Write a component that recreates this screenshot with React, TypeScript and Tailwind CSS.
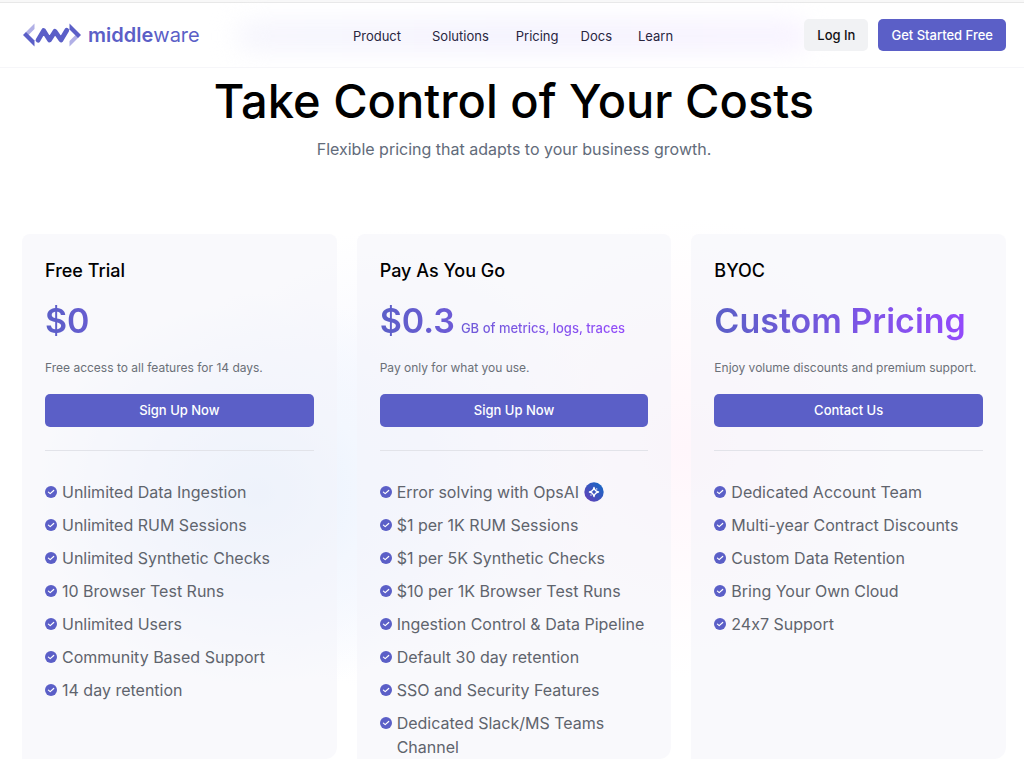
const navLinks = [
  { label: "Product", spacing: "mr-[31px]" },
  { label: "Solutions", spacing: "mr-[27px]" },
  { label: "Pricing", spacing: "mr-[22px]" },
  { label: "Docs", spacing: "mr-[26px]" },
  { label: "Learn", spacing: "" },
];

const plans = [
  {
    name: "Free Trial",
    price: "$0",
    unit: "",
    description: "Free access to all features for 14 days.",
    cta: "Sign Up Now",
    features: [
      "Unlimited Data Ingestion",
      "Unlimited RUM Sessions",
      "Unlimited Synthetic Checks",
      "10 Browser Test Runs",
      "Unlimited Users",
      "Community Based Support",
      "14 day retention",
    ],
  },
  {
    name: "Pay As You Go",
    price: "$0.3",
    unit: "GB of metrics, logs, traces",
    description: "Pay only for what you use.",
    cta: "Sign Up Now",
    features: [
      "Error solving with OpsAI",
      "$1 per 1K RUM Sessions",
      "$1 per 5K Synthetic Checks",
      "$10 per 1K Browser Test Runs",
      "Ingestion Control & Data Pipeline",
      "Default 30 day retention",
      "SSO and Security Features",
      "Dedicated Slack/MS Teams Channel",
    ],
  },
  {
    name: "BYOC",
    price: "Custom Pricing",
    unit: "",
    description: "Enjoy volume discounts and premium support.",
    cta: "Contact Us",
    features: [
      "Dedicated Account Team",
      "Multi-year Contract Discounts",
      "Custom Data Retention",
      "Bring Your Own Cloud",
      "24x7 Support",
    ],
  },
];

type Plan = (typeof plans)[number];

function Logo() {
  return (
    <a href="#" className="flex items-center gap-[7px] text-[#5b5fc7]">
      <svg width="58" height="24" viewBox="0 0 58 24" fill="none" aria-hidden="true">
        <path d="M11.5 0.5V6L5.5 12L2.5 9.5Z" fill="#b1b0e6" />
        <path d="M0 12L3 9L11.5 17.5V23.5Z" fill="#5b5fc7" />
        <path
          d="M15 17.2L20.6 7.6L26.5 17L32 8.4L38 17L43.8 7.2"
          stroke="#5b5fc7"
          strokeWidth="4.8"
          strokeLinecap="round"
          strokeLinejoin="round"
        />
        <path d="M46.5 23.5V18L52.5 12L55.5 14.5Z" fill="#b1b0e6" />
        <path d="M46.5 0.5L58 12L55 15L46.5 6.5Z" fill="#5b5fc7" />
      </svg>
      <span className="text-xl leading-6 font-semibold">
        middle<span className="font-normal">ware</span>
      </span>
    </a>
  );
}

function CheckIcon() {
  return (
    <svg width="12" height="12" viewBox="0 0 12 12" fill="none" className="mt-[6px] shrink-0" aria-hidden="true">
      <circle cx="6" cy="6" r="6" fill="#5b5fc7" />
      <path
        d="M3.4 6.1L5.2 7.6L8.7 4.5"
        stroke="white"
        strokeWidth="1.2"
        strokeLinecap="round"
        strokeLinejoin="round"
      />
    </svg>
  );
}

function OpsBadge() {
  return (
    <svg width="20" height="20" viewBox="0 0 20 20" fill="none" className="mt-[2px] shrink-0" aria-hidden="true">
      <defs>
        <linearGradient id="ops" x1="2" y1="18" x2="18" y2="2" gradientUnits="userSpaceOnUse">
          <stop stopColor="#6240b8" />
          <stop offset="1" stopColor="#1668c4" />
        </linearGradient>
      </defs>
      <circle cx="10" cy="10" r="9.7" fill="url(#ops)" />
      <path
        d="M10 5.4C10.5 8.2 11.8 9.5 14.6 10C11.8 10.5 10.5 11.8 10 14.6C9.5 11.8 8.2 10.5 5.4 10C8.2 9.5 9.5 8.2 10 5.4Z"
        stroke="white"
        strokeWidth="1.3"
        strokeLinejoin="round"
      />
      <circle cx="12.7" cy="6.9" r="0.7" fill="white" />
      <circle cx="7" cy="13" r="0.7" fill="white" />
    </svg>
  );
}

function Header() {
  return (
    <header className="relative flex h-[68px] items-center justify-between overflow-hidden border-b border-[#f6f6f9] bg-white pt-[2px] pr-[18px] pl-[23px]">
      <div className="absolute inset-x-0 top-0 h-[3px] border-b border-[#e8e8e8] bg-[#f8f8f8]"></div>
      <div className="absolute top-5 left-[23%] h-8 w-[56%] rounded-full bg-gradient-to-r from-[#f6f6fd] via-[#f4f2fe] to-[#f8f3ff] blur-[12px]"></div>
      <div className="relative">
        <Logo />
      </div>
      <nav className="relative flex pt-[2px] pl-[22px] text-[13px] leading-5 text-[#29263f]">
        {navLinks.map((link) => (
          <a key={link.label} href="#" className={link.spacing}>
            {link.label}
          </a>
        ))}
      </nav>
      <div className="relative flex gap-[10px] text-[13px] leading-5 font-medium">
        <button className="h-8 rounded-[5px] bg-[#f1f2f4] px-[13px] text-[#111113]">Log In</button>
        <button className="h-8 rounded-[5px] bg-[#5b5fc7] px-[13px] text-white">Get Started Free</button>
      </div>
    </header>
  );
}

function PlanCard({ plan }: { plan: Plan }) {
  return (
    <article className="rounded-t-lg rounded-br-xl bg-[#f4f4fa]/50 px-[23px] pt-[23px]">
      <h2 className="text-lg leading-7 font-medium text-black">{plan.name}</h2>
      <div className="mt-[14px] flex h-11 items-baseline bg-gradient-to-r from-[#5b5fc7] to-[#9747ff] bg-clip-text whitespace-nowrap text-transparent">
        <span className="text-[34px] leading-11 font-semibold">{plan.price}</span>
        {plan.unit && <span className="ml-[6px] text-[13px] leading-5 font-medium">{plan.unit}</span>}
      </div>
      <p className="mt-[15px] text-xs leading-5 whitespace-nowrap text-[#6b7078]">{plan.description}</p>
      <button className="mt-4 h-[33px] w-full rounded-[5px] bg-[#5b5fc7] text-[13px] font-medium text-white">
        {plan.cta}
      </button>
      <hr className="mt-[23px] border-[#e2e3e9]" />
      <ul className="mt-[29px] flex flex-col gap-[9px] text-base leading-6 text-[#5f646d]">
        {plan.features.map((feature) => (
          <li key={feature} className="flex gap-[5px]">
            <CheckIcon />
            <span>{feature}</span>
            {feature.includes("OpsAI") && <OpsBadge />}
          </li>
        ))}
      </ul>
    </article>
  );
}

export default function App() {
  return (
    <div className="min-h-screen overflow-hidden bg-white font-['Inter',sans-serif] [font-feature-settings:'calt'_0]">
      <Header />
      <main className="pr-[18px] pl-[22px]">
        <div className="pt-[3px] text-center">
          <h1 className="text-[47px] leading-[60px] font-medium text-black">Take Control of Your Costs</h1>
          <p className="mt-[6px] text-base leading-6 text-[#626b7a]">
            Flexible pricing that adapts to your business growth.
          </p>
        </div>
        <section className="relative mt-[73px]">
          <div className="absolute -inset-x-5 -top-10 bottom-0 bg-[radial-gradient(ellipse_230px_200px_at_25%_53%,#e8f1fd_0%,#f3f7fe_50%,transparent_100%),radial-gradient(ellipse_230px_230px_at_38%_47%,#f4f5fe_0%,transparent_100%),radial-gradient(ellipse_230px_230px_at_67%_45%,#fff6fb_0%,transparent_100%)]"></div>
          <div className="relative grid grid-cols-3 gap-5">
            {plans.map((plan) => (
              <PlanCard key={plan.name} plan={plan} />
            ))}
          </div>
        </section>
      </main>
    </div>
  );
}
